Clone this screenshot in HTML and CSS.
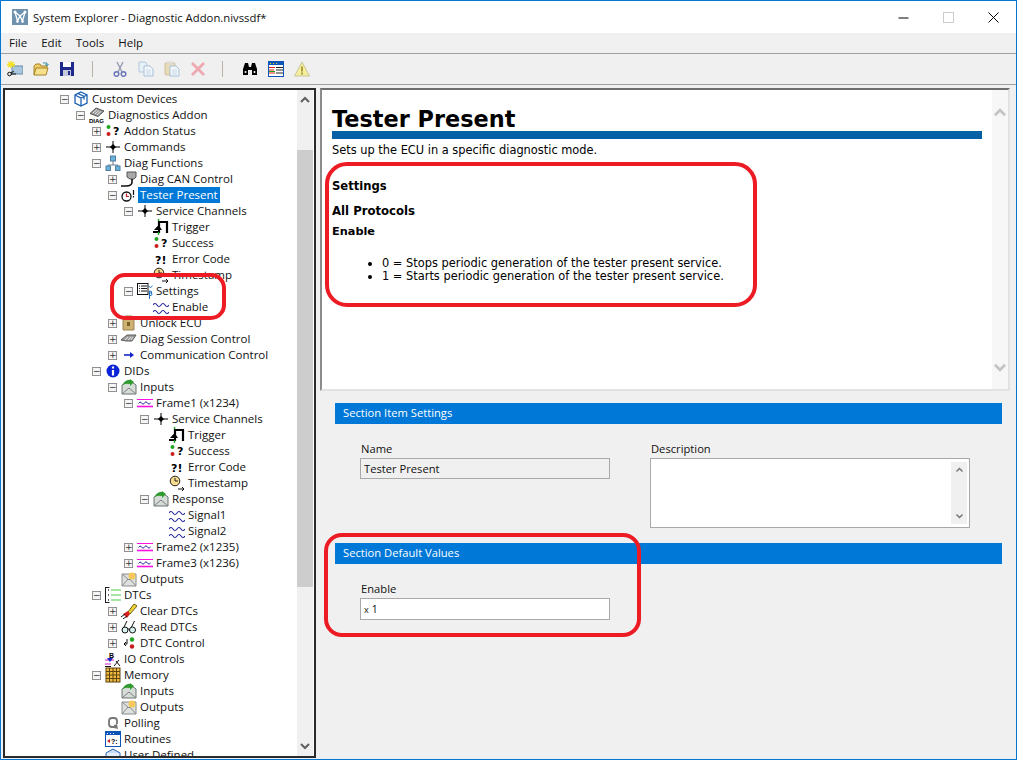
FILE: index.html
```html
<!DOCTYPE html>
<html lang="en">
<head>
    <meta charset="UTF-8">
    <title>System Explorer - Diagnostic Addon.nivssdf*</title>
    <link rel="stylesheet" href="styles.css">
</head>
<body>
    <!-- icon sheet, every tree and toolbar icon is a symbol -->
    <svg class="sheet" xmlns="http://www.w3.org/2000/svg">
        <symbol id="i-cube" viewBox="0 0 16 16"><path d="M8 1l6 3v8l-6 3-6-3V4zM2 4l6 3 6-3M8 7v8M5 2.500l6 3v3" fill="#fff" stroke="#1c5fb4" stroke-width="1.300"/></symbol>
        <symbol id="i-diag" viewBox="0 0 16 16"><path d="M1 6.500l6-5.500 8 3-6 5.500z" fill="#9a9a9a" stroke="#555"/><path d="M4 6l4-3.500M6 7l4-3.500M8 8l4-3.500" stroke="#e4e4e4"/><text x="0" y="15.500" class="tiny">DIAG</text></symbol>
        <symbol id="i-status" viewBox="0 0 16 16"><circle cx="3.500" cy="4" r="2" fill="#1fa51f"/><circle cx="3.500" cy="11" r="2" fill="#c81e1e"/><text x="8" y="12" class="glyph">?</text></symbol>
        <symbol id="i-cmd" viewBox="0 0 16 16"><path d="M1 8h14M8 2v12" stroke="#000"/><path d="M8 5l3 3-3 3-3-3z" fill="#000"/></symbol>
        <symbol id="i-net" viewBox="0 0 16 16"><path d="M8 6v4M3 13v-3h10v3" fill="none" stroke="#6d7f8f"/><rect x="5.500" y="1" width="5" height="5" fill="#6cb2dc" stroke="#4f7f9f"/><rect x="1" y="11" width="4.500" height="4.500" fill="#6cb2dc" stroke="#4f7f9f"/><rect x="10.500" y="11" width="4.500" height="4.500" fill="#6cb2dc" stroke="#4f7f9f"/></symbol>
        <symbol id="i-can" viewBox="0 0 16 16"><path d="M6 1h9v5l-2 2H9L6 6z" fill="#a9a9a9" stroke="#555"/><path d="M11 8v3c0 3-3 4-6 4H0" fill="none" stroke="#111" stroke-width="1.600"/></symbol>
        <symbol id="i-tester" viewBox="0 0 16 16"><circle cx="5.500" cy="9.500" r="4.500" fill="#fff" stroke="#111" stroke-width="1.300"/><path d="M5.500 6.500v3h2.500" fill="none" stroke="#c81e1e" stroke-width="1.200"/><path d="M12.500 3v5M12.500 9v1.500" stroke="#111" stroke-width="1.200"/></symbol>
        <symbol id="i-trigger" viewBox="0 0 16 16"><path d="M0 13h6V3h8v11" fill="none" stroke="#000" stroke-width="2.200"/><path d="M1 11h8L5.500 6z" fill="#000"/><path d="M5.500 0v2M5.500 13v3" stroke="#16a316" stroke-width="1.400"/></symbol>
        <symbol id="i-error" viewBox="0 0 16 16"><text x="2" y="12.500" class="glyph">?!</text></symbol>
        <symbol id="i-time" viewBox="0 0 16 16"><circle cx="6" cy="6" r="4.800" fill="#f6dc8c" stroke="#222"/><path d="M6 3v3h3" fill="none" stroke="#222"/><path d="M9 14h6M13 12l2 2-2 2" fill="none" stroke="#111"/></symbol>
        <symbol id="i-settings" viewBox="0 0 16 16"><rect x="0.500" y="0.500" width="10.500" height="11" fill="#fff" stroke="#111"/><path d="M2 3h1M4 3h6M2 5.500h1M4 5.500h6M2 8h1M4 8h6" stroke="#111"/><path d="M11.500 3q2 3 4 0M12.500 8v8M12.500 8q3 0 2 2-2 0 0 0 2 2-2 3" fill="none" stroke="#1c6fc4"/></symbol>
        <symbol id="i-wave" viewBox="0 0 16 16"><path d="M0 6q2-3 4 0t4 0 4 0 4 0M0 13q2-3 4 0t4 0 4 0 4 0" fill="none" stroke="#23239c" stroke-width="1.100"/></symbol>
        <symbol id="i-lock" viewBox="0 0 16 16"><path d="M2 4h11v11H2z" fill="#cdb173" stroke="#9c8550"/><path d="M4 1h7v3H4z" fill="#e4d3a6" stroke="#9c8550"/><rect x="6" y="7" width="3" height="4" fill="#7a5f28"/></symbol>
        <symbol id="i-chip" viewBox="0 0 16 16"><path d="M0 9l6-5h9l-4 6H5z" fill="#9d9d9d" stroke="#5c5c5c"/><path d="M4 9l3-3M7 9l3-3M10 9l2-3" stroke="#e6e6e6"/></symbol>
        <symbol id="i-arrow" viewBox="0 0 16 16"><path d="M3 8h7" stroke="#1426c8" stroke-width="1.600"/><path d="M9 5l4 3-4 3z" fill="#1426c8"/></symbol>
        <symbol id="i-info" viewBox="0 0 16 16"><circle cx="8" cy="8" r="6.500" fill="#0c24d8"/><path d="M8 3.500v2M8 7v5.500" stroke="#fff" stroke-width="2.200"/></symbol>
        <symbol id="i-in" viewBox="0 0 16 16"><path d="M1 6l7-5 7 5v9H1z" fill="#d6dbd8" stroke="#6d7470"/><path d="M1 15l7-6 7 6" fill="none" stroke="#7c8480"/><path d="M2 6q1-5 7-5v-1l4 3-4 4V5q-4-1-7 1z" fill="#2f9b2f"/></symbol>
        <symbol id="i-out" viewBox="0 0 16 16"><path d="M1 3h14v12H1z" fill="#dde0de" stroke="#8a8f8c"/><path d="M1 3l7 6 7-6M1 15l6-7M15 15l-6-7" fill="none" stroke="#8a8f8c"/><circle cx="11" cy="5" r="3.500" fill="#f7c75c"/></symbol>
        <symbol id="i-frame" viewBox="0 0 16 16"><path d="M0 4.500h16" stroke="#ff10e8"/><path d="M0 11.500h16" stroke="#ff10e8" stroke-width="1.600"/><path d="M1.500 8.500q1.500-3 3-.5t3 0 3 0 3 0" fill="none" stroke="#23239c"/></symbol>
        <symbol id="i-dtcs" viewBox="0 0 16 16"><path d="M.5 0v16M.5 .5h4M.5 15.500h4" stroke="#222" fill="none"/><path d="M6 3h10M6 8h10M6 13h10" stroke="#a6e6a0" stroke-width="2"/><path d="M3 3h1M3 8h1M3 13h1" stroke="#666" stroke-width="2"/></symbol>
        <symbol id="i-clear" viewBox="0 0 16 16"><path d="M7 9l6-8 3 2-7 8z" fill="#f3d53a" stroke="#6a5a10"/><path d="M2 11l5-3 2 3-3 4z" fill="#d82020"/><path d="M0 14l4-3M2 16l4-3" stroke="#111"/></symbol>
        <symbol id="i-glass" viewBox="0 0 16 16"><circle cx="4" cy="11" r="3" fill="#d8f2ef" stroke="#111"/><circle cx="11.500" cy="11" r="3" fill="#d8f2ef" stroke="#111"/><path d="M7 10l1.500 0M3 8l3-6M10.500 8l3-6" fill="none" stroke="#111"/></symbol>
        <symbol id="i-ctl" viewBox="0 0 16 16"><path d="M6 4v5H3M5 7L3 9l2 2" fill="none" stroke="#111"/><circle cx="11" cy="4.500" r="2.200" fill="#1fa51f"/><circle cx="11" cy="11.500" r="2.200" fill="#c81e1e"/></symbol>
        <symbol id="i-io" viewBox="0 0 16 16"><text x="4" y="6.500" class="tiny-b">B</text><path d="M0 9h9M0 13h6" stroke="#d018c8"/><path d="M2 7h6l-3 4z" fill="#1426c8"/><path d="M0 15.500h6M9 15l5-6M11 10l4 5" stroke="#111"/></symbol>
        <symbol id="i-mem" viewBox="0 0 16 16"><rect x="1" y="1" width="14" height="14" fill="#f0b83c" stroke="#5c4410"/><path d="M4.500 1v14M8 1v14M11.500 1v14M1 4.500h14M1 8h14M1 11.500h14" stroke="#5c4410"/></symbol>
        <symbol id="i-poll" viewBox="0 0 16 16"><path d="M10 12H7a3 3 0 0 1-3-3V6a3 3 0 0 1 3-3h2a3 3 0 0 1 3 3v3" fill="none" stroke="#777" stroke-width="1.800"/><path d="M9 10l3-1 1 5-4-1z" fill="#777"/></symbol>
        <symbol id="i-rout" viewBox="0 0 16 16"><rect x=".5" y=".5" width="15" height="15" fill="#fff" stroke="#0b54b8"/><rect x="1" y="1" width="14" height="3" fill="#0b54b8"/><path d="M2 2.500h1M5 2.500h1M8 2.500h1" stroke="#fff"/><path d="M2 10l3-2v4z" fill="#c81e1e"/><text x="6" y="13" class="tiny-b">?:</text></symbol>
        <symbol id="i-user" viewBox="0 0 16 16"><path d="M1 6l7-4 7 4-7 4z" fill="#c8dcf4" stroke="#2a62b8"/><path d="M1 6v6l7 4 7-4V6" fill="#e4eefa" stroke="#2a62b8"/></symbol>
        <symbol id="i-app" viewBox="0 0 16 16"><rect width="16" height="16" fill="#6f93ae"/><path d="M3 3l2.500 9 2.500-5 2.500 5L13 3M3 3l5 4 5-4" fill="none" stroke="#fff" stroke-width="1.300"/><circle cx="3" cy="3" r="1.500" fill="#fff"/><circle cx="13" cy="3" r="1.500" fill="#fff"/><circle cx="5.500" cy="12.500" r="1.300" fill="#fff"/><circle cx="10.500" cy="12.500" r="1.300" fill="#fff"/></symbol>
        <symbol id="t-new" viewBox="0 0 16 16"><rect x="5" y="5" width="11" height="8" fill="#a9c6de" stroke="#6d8aa5"/><path d="M4 0v7M0 3.500h8M1 1l6 5M7 1L1 6" stroke="#f2e01a" stroke-width="1.300"/><circle cx="2.500" cy="13" r="1.800" fill="none" stroke="#111"/><path d="M4 13h5M4 11.500l3-1" stroke="#111"/></symbol>
        <symbol id="t-open" viewBox="0 0 16 16"><path d="M1 14V5l2-2h4l1 2h6v2" fill="#f0cc6a" stroke="#a5842a"/><path d="M1 14l2-7h12l-2 7z" fill="#f7e08c" stroke="#a5842a"/><path d="M10 2h4v2M12.500 3l1.500 2 1.500-2" fill="none" stroke="#3b8fa8"/></symbol>
        <symbol id="t-save" viewBox="0 0 16 16"><path d="M1 1h14v14H1z" fill="#1f2a8c"/><rect x="4" y="1" width="8" height="5" fill="#fff"/><rect x="4" y="9" width="8" height="6" fill="#c4c8d8"/><rect x="9" y="10" width="2" height="4" fill="#1f2a8c"/></symbol>
        <symbol id="t-cut" viewBox="0 0 16 16"><path d="M5 1l5 10M11 1L6 11" stroke="#9aa0b4" stroke-width="1.500"/><circle cx="4.500" cy="13" r="2.300" fill="none" stroke="#6c78b8" stroke-width="1.500"/><circle cx="11.500" cy="13" r="2.300" fill="none" stroke="#6c78b8" stroke-width="1.500"/></symbol>
        <symbol id="t-copy" viewBox="0 0 16 16"><path d="M1 1h6l2 2v8H1z" fill="#e8f0f8" stroke="#b4c8dc"/><path d="M6 5h6l3 3v7H6z" fill="#f2f7fb" stroke="#a8c0d8"/><path d="M8 9h5M8 11h5M8 13h5" stroke="#c8d8e8"/></symbol>
        <symbol id="t-paste" viewBox="0 0 16 16"><rect x="1" y="2" width="10" height="12" rx="1" fill="#e8dcb8" stroke="#cdbf98"/><rect x="3" y="0.500" width="6" height="3" fill="#dcdcd0"/><path d="M6 5h6l3 3v7H6z" fill="#f2f7fb" stroke="#a8c0d8"/><path d="M8 9h5M8 11h5M8 13h5" stroke="#c8d8e8"/></symbol>
        <symbol id="t-del" viewBox="0 0 16 16"><path d="M2 2l12 12M14 2L2 14" stroke="#f0a8b0" stroke-width="2.800"/></symbol>
        <symbol id="t-find" viewBox="0 0 16 16"><path d="M1 8l2-6h3l1 4h2l1-4h3l2 6v6H10V9H6v5H1z" fill="#000"/><circle cx="3.500" cy="11" r="1" fill="#fff"/><circle cx="12.500" cy="11" r="1" fill="#fff"/></symbol>
        <symbol id="t-table" viewBox="0 0 16 16"><rect x=".5" y=".5" width="15" height="15" fill="#fff" stroke="#0b54b8"/><rect x="1" y="1" width="14" height="3" fill="#0b54b8"/><path d="M2 2.500h1M5 2.500h1M8 2.500h1" stroke="#f2e01a"/><path d="M1 6.500h6M1 9h5M1 12h6" stroke="#d82020"/><path d="M1 10.500h6" stroke="#1fa51f"/><path d="M8 6.500h7M8 9h7M8 12h7" stroke="#222"/></symbol>
        <symbol id="t-warn" viewBox="0 0 16 16"><path d="M8 1l7.500 14H.5z" fill="#f5ee9a" stroke="#c8c49a"/><path d="M8 5.500v5M8 11.500v2" stroke="#9c8a30" stroke-width="1.600"/></symbol>
    </svg>

    <div class="window">
        <div class="titlebar">
            <svg class="app-icon"><use href="#i-app"/></svg>
            <span class="title">System Explorer - Diagnostic Addon.nivssdf*</span>
            <div class="caption">
                <svg class="cap-btn" viewBox="0 0 11 11"><path d="M.5 6h10" stroke="#000"/></svg>
                <svg class="cap-btn" viewBox="0 0 11 11"><rect x=".5" y=".5" width="10" height="10" fill="none" stroke="#ccc"/></svg>
                <svg class="cap-btn" viewBox="0 0 11 11"><path d="M.5 .5l10 10M10.500 .5l-10 10" stroke="#000"/></svg>
            </div>
        </div>

        <div class="menubar">
            <span class="menu-item">File</span>
            <span class="menu-item">Edit</span>
            <span class="menu-item">Tools</span>
            <span class="menu-item">Help</span>
        </div>

        <div class="toolbar">
            <svg class="tool"><use href="#t-new"/></svg>
            <svg class="tool"><use href="#t-open"/></svg>
            <svg class="tool"><use href="#t-save"/></svg>
            <span class="tool-sep"></span>
            <svg class="tool"><use href="#t-cut"/></svg>
            <svg class="tool"><use href="#t-copy"/></svg>
            <svg class="tool"><use href="#t-paste"/></svg>
            <svg class="tool"><use href="#t-del"/></svg>
            <span class="tool-sep"></span>
            <svg class="tool"><use href="#t-find"/></svg>
            <svg class="tool"><use href="#t-table"/></svg>
            <svg class="tool"><use href="#t-warn"/></svg>
        </div>

        <div class="main">
            <div class="tree">
                <div class="rows">
                    <div class="node lv0"><span class="exp">−</span><svg class="ico"><use href="#i-cube"/></svg><span class="lbl">Custom Devices</span></div>
                    <div class="node lv1"><span class="exp">−</span><svg class="ico"><use href="#i-diag"/></svg><span class="lbl">Diagnostics Addon</span></div>
                    <div class="node lv2"><span class="exp">+</span><svg class="ico"><use href="#i-status"/></svg><span class="lbl">Addon Status</span></div>
                    <div class="node lv2"><span class="exp">+</span><svg class="ico"><use href="#i-cmd"/></svg><span class="lbl">Commands</span></div>
                    <div class="node lv2"><span class="exp">−</span><svg class="ico"><use href="#i-net"/></svg><span class="lbl">Diag Functions</span></div>
                    <div class="node lv3"><span class="exp">+</span><svg class="ico"><use href="#i-can"/></svg><span class="lbl">Diag CAN Control</span></div>
                    <div class="node lv3"><span class="exp">−</span><svg class="ico"><use href="#i-tester"/></svg><span class="lbl selected">Tester Present</span></div>
                    <div class="node lv4"><span class="exp">−</span><svg class="ico"><use href="#i-cmd"/></svg><span class="lbl">Service Channels</span></div>
                    <div class="node lv5"><span class="no-exp"></span><svg class="ico"><use href="#i-trigger"/></svg><span class="lbl">Trigger</span></div>
                    <div class="node lv5"><span class="no-exp"></span><svg class="ico"><use href="#i-status"/></svg><span class="lbl">Success</span></div>
                    <div class="node lv5"><span class="no-exp"></span><svg class="ico"><use href="#i-error"/></svg><span class="lbl">Error Code</span></div>
                    <div class="node lv5"><span class="no-exp"></span><svg class="ico"><use href="#i-time"/></svg><span class="lbl">Timestamp</span></div>
                    <div class="node lv4"><span class="exp">−</span><svg class="ico"><use href="#i-settings"/></svg><span class="lbl">Settings</span></div>
                    <div class="node lv5"><span class="no-exp"></span><svg class="ico"><use href="#i-wave"/></svg><span class="lbl">Enable</span></div>
                    <div class="node lv3"><span class="exp">+</span><svg class="ico"><use href="#i-lock"/></svg><span class="lbl">Unlock ECU</span></div>
                    <div class="node lv3"><span class="exp">+</span><svg class="ico"><use href="#i-chip"/></svg><span class="lbl">Diag Session Control</span></div>
                    <div class="node lv3"><span class="exp">+</span><svg class="ico"><use href="#i-arrow"/></svg><span class="lbl">Communication Control</span></div>
                    <div class="node lv2"><span class="exp">−</span><svg class="ico"><use href="#i-info"/></svg><span class="lbl">DIDs</span></div>
                    <div class="node lv3"><span class="exp">−</span><svg class="ico"><use href="#i-in"/></svg><span class="lbl">Inputs</span></div>
                    <div class="node lv4"><span class="exp">−</span><svg class="ico"><use href="#i-frame"/></svg><span class="lbl">Frame1 (x1234)</span></div>
                    <div class="node lv5"><span class="exp">−</span><svg class="ico"><use href="#i-cmd"/></svg><span class="lbl">Service Channels</span></div>
                    <div class="node lv6"><span class="no-exp"></span><svg class="ico"><use href="#i-trigger"/></svg><span class="lbl">Trigger</span></div>
                    <div class="node lv6"><span class="no-exp"></span><svg class="ico"><use href="#i-status"/></svg><span class="lbl">Success</span></div>
                    <div class="node lv6"><span class="no-exp"></span><svg class="ico"><use href="#i-error"/></svg><span class="lbl">Error Code</span></div>
                    <div class="node lv6"><span class="no-exp"></span><svg class="ico"><use href="#i-time"/></svg><span class="lbl">Timestamp</span></div>
                    <div class="node lv5"><span class="exp">−</span><svg class="ico"><use href="#i-in"/></svg><span class="lbl">Response</span></div>
                    <div class="node lv6"><span class="no-exp"></span><svg class="ico"><use href="#i-wave"/></svg><span class="lbl">Signal1</span></div>
                    <div class="node lv6"><span class="no-exp"></span><svg class="ico"><use href="#i-wave"/></svg><span class="lbl">Signal2</span></div>
                    <div class="node lv4"><span class="exp">+</span><svg class="ico"><use href="#i-frame"/></svg><span class="lbl">Frame2 (x1235)</span></div>
                    <div class="node lv4"><span class="exp">+</span><svg class="ico"><use href="#i-frame"/></svg><span class="lbl">Frame3 (x1236)</span></div>
                    <div class="node lv3"><span class="no-exp"></span><svg class="ico"><use href="#i-out"/></svg><span class="lbl">Outputs</span></div>
                    <div class="node lv2"><span class="exp">−</span><svg class="ico"><use href="#i-dtcs"/></svg><span class="lbl">DTCs</span></div>
                    <div class="node lv3"><span class="exp">+</span><svg class="ico"><use href="#i-clear"/></svg><span class="lbl">Clear DTCs</span></div>
                    <div class="node lv3"><span class="exp">+</span><svg class="ico"><use href="#i-glass"/></svg><span class="lbl">Read DTCs</span></div>
                    <div class="node lv3"><span class="exp">+</span><svg class="ico"><use href="#i-ctl"/></svg><span class="lbl">DTC Control</span></div>
                    <div class="node lv2"><span class="no-exp"></span><svg class="ico"><use href="#i-io"/></svg><span class="lbl">IO Controls</span></div>
                    <div class="node lv2"><span class="exp">−</span><svg class="ico"><use href="#i-mem"/></svg><span class="lbl">Memory</span></div>
                    <div class="node lv3"><span class="no-exp"></span><svg class="ico"><use href="#i-in"/></svg><span class="lbl">Inputs</span></div>
                    <div class="node lv3"><span class="no-exp"></span><svg class="ico"><use href="#i-out"/></svg><span class="lbl">Outputs</span></div>
                    <div class="node lv2"><span class="no-exp"></span><svg class="ico"><use href="#i-poll"/></svg><span class="lbl">Polling</span></div>
                    <div class="node lv2"><span class="no-exp"></span><svg class="ico"><use href="#i-rout"/></svg><span class="lbl">Routines</span></div>
                    <div class="node lv2"><span class="no-exp"></span><svg class="ico"><use href="#i-user"/></svg><span class="lbl">User Defined</span></div>
                </div>
                <div class="vscroll">
                    <svg class="chev" viewBox="0 0 12 8"><path d="M2 6l4-4 4 4" fill="none" stroke="#606060" stroke-width="2"/></svg>
                    <div class="thumb"></div>
                    <svg class="chev chev-bottom" viewBox="0 0 12 8"><path d="M2 2l4 4 4-4" fill="none" stroke="#606060" stroke-width="2"/></svg>
                </div>
            </div>

            <div class="content">
                <div class="help">
                    <div class="help-body">
                        <h1>Tester Present</h1>
                        <div class="rule"></div>
                        <p class="intro">Sets up the ECU in a specific diagnostic mode.</p>
                        <h2>Settings</h2>
                        <h3>All Protocols</h3>
                        <h4>Enable</h4>
                        <ul>
                            <li>0 = Stops periodic generation of the tester present service.</li>
                            <li>1 = Starts periodic generation of the tester present service.</li>
                        </ul>
                    </div>
                    <div class="vscroll light">
                        <svg class="chev" viewBox="0 0 12 8"><path d="M1.500 6.500l4.500-4.500 4.500 4.500" fill="none" stroke="#c4c4c4" stroke-width="2.400"/></svg>
                        <svg class="chev chev-bottom" viewBox="0 0 12 8"><path d="M1.500 1.500l4.500 4.500 4.500-4.500" fill="none" stroke="#c4c4c4" stroke-width="2.400"/></svg>
                    </div>
                </div>

                <div class="section-bar">Section Item Settings</div>
                <div class="fields">
                    <div class="field">
                        <label>Name</label>
                        <div class="box readonly">Tester Present</div>
                    </div>
                    <div class="field wide">
                        <label>Description</label>
                        <div class="box memo">
                            <div class="memo-scroll">
                                <svg class="mini" viewBox="0 0 12 8"><path d="M2 6l4-4 4 4" fill="none" stroke="#707070" stroke-width="1.800"/></svg>
                                <svg class="mini" viewBox="0 0 12 8"><path d="M2 2l4 4 4-4" fill="none" stroke="#707070" stroke-width="1.800"/></svg>
                            </div>
                        </div>
                    </div>
                </div>

                <div class="section-bar second">Section Default Values</div>
                <div class="fields">
                    <div class="field">
                        <label>Enable</label>
                        <div class="box input"><span class="radix">x</span> 1</div>
                    </div>
                </div>
            </div>
        </div>
    </div>

    <!-- red marks drawn over the screenshot -->
    <div class="mark mark-help"></div>
    <div class="mark mark-tree"></div>
    <div class="mark mark-defaults"></div>
</body>
</html>
```

FILE: styles.css
```css
* {
    box-sizing: border-box;
}
html, body {
    margin: 0;
    width: 1017px;
    height: 760px;
    overflow: hidden;
}
body {
    position: relative;
    font-family: "Open Sans", "Noto Sans", sans-serif;
    font-size: 11.5px;
    color: #111;
    background: #f0f0f0;
}
.sheet {
    display: none;
}
.tiny {
    font: bold 6px "Liberation Sans", sans-serif;
    fill: #000;
}
.tiny-b {
    font: bold 7px "Liberation Sans", sans-serif;
    fill: #000;
}
.glyph {
    font: bold 11px "DejaVu Sans", sans-serif;
    fill: #000;
}

/* window frame */
.window {
    width: 1017px;
    height: 760px;
    border: 1px solid #0078d7;
    display: flex;
    flex-direction: column;
}
.titlebar {
    height: 32px;
    background: white;
    display: flex;
    align-items: center;
    padding-left: 11px;
    flex-shrink: 0;
}
.app-icon {
    width: 16px;
    height: 16px;
}
.title {
    margin-left: 5px;
    font-size: 11.300px;
}
.caption {
    margin-left: auto;
    display: flex;
    gap: 34px;
    padding-right: 17px;
    align-items: center;
}
.cap-btn {
    width: 11px;
    height: 11px;
    display: block;
}
.menubar {
    height: 21px;
    border-bottom: 1px solid #a0a0a0;
    display: flex;
    align-items: center;
    gap: 14px;
    padding-left: 8px;
    padding-bottom: 1px;
    flex-shrink: 0;
}
.toolbar {
    height: 31px;
    border-bottom: 1px solid #a0a0a0;
    display: flex;
    align-items: center;
    padding-left: 6px;
    gap: 10px;
    flex-shrink: 0;
}
.tool {
    width: 16px;
    height: 16px;
}
.tool-sep {
    width: 1px;
    height: 16px;
    background: #b9b3a4;
    margin: 0 9px 0 7px;
}
.tool-sep:nth-of-type(2) {
    margin-left: 6px;
}

/* tree pane */
.main {
    flex: 1;
    display: flex;
    padding: 3px 0 1px 2px;
    gap: 4px;
    min-height: 0;
}
.tree {
    width: 313px;
    background: white;
    border: 2px solid #2a2a2a;
    display: flex;
    overflow: hidden;
    flex-shrink: 0;
}
.rows {
    flex: 1;
    padding-top: 1px;
    overflow: hidden;
}
.node {
    height: 16px;
    display: flex;
    align-items: center;
    white-space: nowrap;
}
.lv0 { padding-left: 55px; }
.lv1 { padding-left: 71px; }
.lv2 { padding-left: 87px; }
.lv3 { padding-left: 103px; }
.lv4 { padding-left: 119px; }
.lv5 { padding-left: 135px; }
.lv6 { padding-left: 151px; }
.exp {
    width: 9px;
    height: 9px;
    margin-right: 4px;
    border: 1px solid #919191;
    background: #f4f4f4;
    color: #333;
    font: 9px/7px "DejaVu Sans", sans-serif;
    text-align: center;
    flex-shrink: 0;
}
.no-exp {
    width: 13px;
    flex-shrink: 0;
}
.ico {
    width: 16px;
    height: 16px;
    flex-shrink: 0;
}
.lbl {
    margin-left: 1px;
    padding: 0 2px;
    line-height: 16px;
}
.selected {
    background: #0078d7;
    color: white;
}
.vscroll {
    width: 16px;
    margin-right: 1px;
    background: #f0f0f0;
    display: flex;
    flex-direction: column;
    align-items: center;
    flex-shrink: 0;
}
.chev {
    width: 12px;
    height: 8px;
    margin-top: 6px;
    flex-shrink: 0;
}
.chev-bottom {
    margin-top: auto;
    margin-bottom: 6px;
}
.thumb {
    width: 16px;
    height: 437px;
    margin-top: 46px;
    background: #cdcdcd;
}

/* right side */
.content {
    width: 690px;
    flex-shrink: 0;
}
.help {
    height: 303px;
    background: white;
    border-top: 2px solid #6e6e6e;
    border-left: 2px solid #8c8c8c;
    border-right: 2px solid #e2e2e2;
    border-bottom: 2px solid #e2e2e2;
    display: flex;
}
.help-body {
    flex: 1;
    padding: 17px 10px 0 10px;
    font-family: "DejaVu Sans", sans-serif;
    font-size: 11.400px;
    color: #000;
}
.help h1 {
    margin: 0;
    font-size: 22.400px;
    line-height: 24px;
}
.rule {
    height: 8px;
    background: #0560a6;
}
.intro {
    margin: 4px 0 0;
    line-height: 14px;
}
.help h2 {
    margin: 21px 0 0;
    font-size: 11.600px;
    line-height: 16px;
}
.help h3 {
    margin: 9px 0 0;
    font-size: 11.700px;
    line-height: 16px;
}
.help h4 {
    margin: 6px 0 0;
    font-size: 11.300px;
    line-height: 14px;
}
.help ul {
    margin: 18px 0 0;
    padding-left: 50px;
}
.help li {
    line-height: 13px;
}
.vscroll.light {
    background: #f7f7f7;
    margin: 0;
}
.vscroll.light .chev {
    width: 14px;
    height: 9px;
    margin-top: 18px;
}
.vscroll.light .chev-bottom {
    margin-top: auto;
    margin-bottom: 17px;
}
.section-bar {
    margin: 12px 0 0 15px;
    width: 667px;
    height: 21px;
    line-height: 20px;
    padding-left: 8px;
    background: #0078d7;
    color: white;
    font-size: 11.200px;
}
.section-bar.second {
    margin-top: 15px;
}
.fields {
    display: flex;
    gap: 40px;
    margin: 17px 0 0 40px;
    font-size: 11.200px;
}
.field {
    width: 250px;
}
.field.wide {
    width: 320px;
}
.field label {
    display: block;
    height: 17px;
    line-height: 16px;
    padding-left: 1px;
}
.box {
    border: 1px solid #a9a9a9;
    background: white;
    height: 22px;
    line-height: 19px;
    padding-left: 3px;
}
.readonly {
    height: 21px;
    background: #f0f0f0;
}
.radix {
    font-size: 9px;
}
.memo {
    height: 70px;
    display: flex;
    justify-content: flex-end;
    padding: 3px 2px;
}
.memo-scroll {
    width: 16px;
    background: #f0f0f0;
    display: flex;
    flex-direction: column;
    justify-content: space-between;
    align-items: center;
    padding: 5px 0;
}
.mini {
    width: 9px;
    height: 6px;
}

/* annotation marks */
.mark {
    position: absolute;
    border: 4px solid #ed1c24;
}
.mark-help {
    left: 325px;
    top: 162px;
    width: 432px;
    height: 145px;
    border-radius: 22px;
}
.mark-tree {
    left: 110px;
    top: 273px;
    width: 116px;
    height: 47px;
    border-radius: 15px;
}
.mark-defaults {
    left: 324px;
    top: 533px;
    width: 317px;
    height: 104px;
    border-radius: 18px;
}
```
